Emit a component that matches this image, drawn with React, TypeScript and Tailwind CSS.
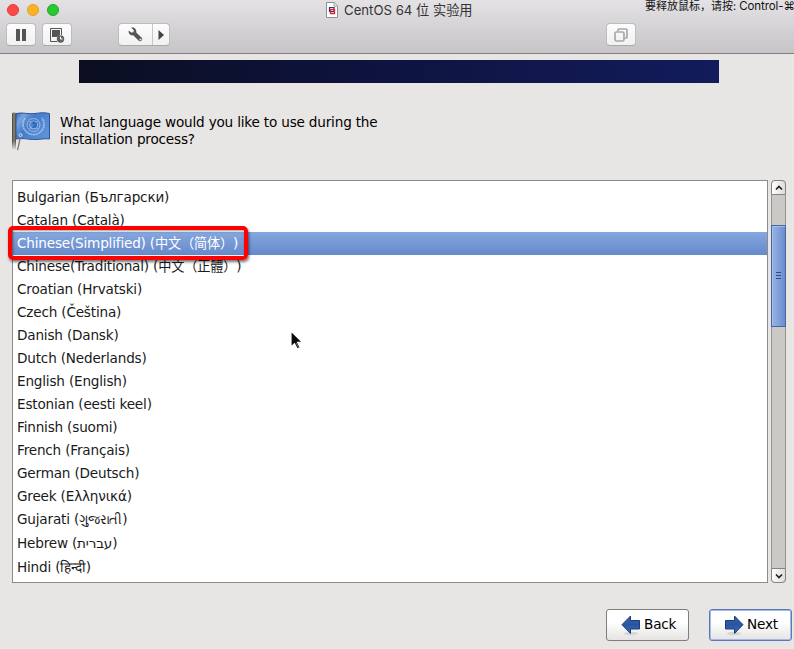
import type { ReactNode } from "react";

type Row = { name: string; native: string; kind?: "cjk" | "tall" | "gujarati"; selected?: boolean };

const languages: Row[] = [
  { name: "Bulgarian", native: "Български" },
  { name: "Catalan", native: "Català" },
  { name: "Chinese(Simplified)", native: "中文（简体）", kind: "cjk", selected: true },
  { name: "Chinese(Traditional)", native: "中文（正體）", kind: "cjk" },
  { name: "Croatian", native: "Hrvatski" },
  { name: "Czech", native: "Čeština" },
  { name: "Danish", native: "Dansk" },
  { name: "Dutch", native: "Nederlands" },
  { name: "English", native: "English" },
  { name: "Estonian", native: "eesti keel" },
  { name: "Finnish", native: "suomi" },
  { name: "French", native: "Français" },
  { name: "German", native: "Deutsch" },
  { name: "Greek", native: "Ελληνικά" },
  { name: "Gujarati", native: "ગુજરાતી", kind: "gujarati" },
  { name: "Hebrew", native: "עברית", kind: "tall" },
  { name: "Hindi", native: "हिन्दी", kind: "tall" },
];

function ToolButton({ className, children }: { className: string; children: ReactNode }) {
  return (
    <div className={`flex h-[23px] items-center justify-center rounded-[4px] border border-[#bdbcbe] border-b-[#a9a8aa] bg-linear-to-b from-[#fdfdfd] to-[#f1f1f1] ${className}`}>
      {children}
    </div>
  );
}

function TitleBar() {
  return (
    <header className="flex h-[54px] shrink-0 flex-col border-b border-[#80807f] bg-linear-to-b from-[#e4e2e4] to-[#c6c4c7]">
      <div className="relative flex h-[23px]">
        <div className="flex gap-2 pt-1 pl-[7px]">
          <span className="size-3 rounded-full border border-[#df3d3c] bg-[#fb4948]" />
          <span className="size-3 rounded-full border border-[#dfa023] bg-[#fdb225]" />
          <span className="size-3 rounded-full border border-[#25a32b] bg-[#2ac833]" />
        </div>
        <svg className="mt-[2px] ml-[267px] h-4 w-3 shrink-0" viewBox="0 0 12 16">
          <path d="M.5.5h7.7l3.3 3.3v11.7H.5z" fill="#fff" stroke="#8e8e90" />
          <path d="M8 .8v3.4h3.5" fill="#e4e4e4" stroke="#a4a4a6" />
          <path d="M3.500 5.500h4.500v4H3.500z" fill="none" stroke="#203a78" strokeWidth="1.200" />
          <path d="M4.500 7.500h4v4h-4z" fill="none" stroke="#e51f2b" strokeWidth="1.300" />
        </svg>
        <h1 className="ml-[6px] h-5 w-[140px] text-[13.2px] leading-5 whitespace-nowrap text-[#343335]">CentOS 64 位 实验用</h1>
        <p className="absolute top-[-3px] left-[645px] text-[11px] leading-[18px] whitespace-nowrap text-[#111]">要释放鼠标，请按: <span className="text-[11.500px] tracking-[-0.1px]">Control-⌘</span></p>
      </div>
      <div className="flex pl-[6px]">
        <ToolButton className="w-[30px]">
          <span className="flex gap-[2px]"><i className="h-3 w-1 bg-[#555]" /><i className="h-3 w-1 bg-[#555]" /></span>
        </ToolButton>
        <ToolButton className="ml-[6px] w-[30px]">
          <svg className="size-4" viewBox="0 0 16 16">
            <path d="M8 14.500H1.500v-13h11V8" fill="none" stroke="#555" />
            <path d="M3 3h8v5L8 10H3z" fill="#555" />
            <circle cx="11.500" cy="12" r="3.700" fill="#606060" />
            <path d="M11.500 9.700V12h2" fill="none" stroke="#fff" strokeWidth="1" />
          </svg>
        </ToolButton>
        <ToolButton className="ml-[46px] w-[52px]">
          <span className="flex h-full w-[34px] items-center justify-center border-r border-[#c6c5c7]">
            <svg className="size-[15px]" viewBox="0 0 15 15">
              <path d="M3.200.7 5.900 3.300 5.300 5.300 3.200 5.600.7 3.500C.3 6.500 2.200 8.900 5.200 8.300L11 14c2 1 4-1 3-3L8.300 5.500C8.600 2.200 6.300 0 3.200.7Z" fill="#555" />
              <circle cx="12.500" cy="12.500" r="1.100" fill="#ddd" />
            </svg>
          </span>
          <span className="flex w-[16px] justify-center"><svg className="h-[10px] w-[6px]" viewBox="0 0 6 10"><path d="M.5 0v10L6 5z" fill="#444" /></svg></span>
        </ToolButton>
        <ToolButton className="ml-[436px] w-[30px]">
          <svg className="size-[14px]" viewBox="0 0 14 14" fill="none" stroke="#a9a8aa" strokeWidth="1.700">
            <rect x="1" y="4" width="9" height="9" rx="1.500" />
            <path d="M4 3.500V2q0-1 1-1h7q1 0 1 1v7q0 1-1 1h-1.500" />
          </svg>
        </ToolButton>
      </div>
    </header>
  );
}

function FlagIcon() {
  return (
    <svg className="h-10 w-10 shrink-0" viewBox="0 1 40 40">
      <defs>
        <linearGradient id="pole" x1="0" x2="1"><stop stopColor="#3e403a" /><stop offset=".5" stopColor="#8a8c83" /><stop offset="1" stopColor="#44463f" /></linearGradient>
        <linearGradient id="cloth" x1="0" x2="1" y2=".6"><stop stopColor="#3465b0" /><stop offset=".2" stopColor="#79a5df" /><stop offset=".45" stopColor="#457bc8" /><stop offset="1" stopColor="#5c91d8" /></linearGradient>
        <linearGradient id="poleFade" x1="0" x2="0" y1="0" y2="1"><stop offset=".75" stopColor="#e8e6e4" stopOpacity="0" /><stop offset="1" stopColor="#e8e6e4" /></linearGradient>
      </defs>
      <path d="M4 3.500C11 2 16 4.500 23 3.500S32 2.500 37.500 3.500v25.500c-6-1-11 1-17 .5S10 28 4 29Z" fill="url(#cloth)" stroke="#2c559e" />
      <g fill="none" stroke="#b4d0f1" opacity=".75">
        <circle cx="21.500" cy="15" r="6.500" />
        <circle cx="21.500" cy="15" r="4" />
        <path d="M13 8c-4 6-2 13 5 16 2 .8 5 .8 7 0 7-3 9-10 5-16" strokeWidth="1.800" strokeDasharray="2 .5" />
        <path d="M17.500 11l8 8m0-8-8 8" strokeWidth=".8" />
      </g>
      <path d="m19 13 3-2 3 2v4l-2 1h-3l1-3z" fill="#2c64ba" opacity=".8" />
      <rect x="0" y="2.500" width="4" height="37" rx="1.500" fill="url(#pole)" />
      <rect x="0" y="2.500" width="4" height="38" fill="url(#poleFade)" />
      <path d="M8.500 26C7.500 31 7 35 5.500 40" fill="none" stroke="#777" strokeWidth="1.300" />
      <circle cx="8.500" cy="25" r="1.500" fill="none" stroke="#d4dfec" />
    </svg>
  );
}

function LanguageRow({ row }: { row: Row }) {
  const height = row.kind === "tall" ? "h-6" : row.kind ? "h-[23px]" : "h-[23px] pb-[2px]";
  const color = row.selected ? "bg-linear-to-b from-[#86a7de] to-[#6689cb] text-white" : "text-[#1a1a1a]";
  const native = row.kind === "cjk" ? "text-[13.200px] [text-spacing-trim:space-all]" : row.kind === "gujarati" ? "text-[13px]" : "";
  return (
    <li className={`relative flex items-center pl-1 whitespace-nowrap ${height} ${color}`}>
      <span className="leading-[22px]">{row.name} (<span className={native}>{row.native}</span>)</span>
      {row.selected && (
        <span className="absolute top-[-6px] left-[-5px] z-10 h-[34px] w-[240px] rounded-[5px] border-4 border-[#fe0000] shadow-[1px_2px_3px_rgba(0,0,0,0.55),inset_1px_1px_3px_rgba(0,0,0,0.4)]" />
      )}
    </li>
  );
}

function ScrollArrow({ down }: { down?: boolean }) {
  return (
    <div className={`flex h-[15px] items-center justify-center border border-[#85837e] bg-linear-to-r from-white to-[#dedddb] ${down ? "rounded-b-[4px]" : "rounded-t-[4px]"}`}>
      <svg className="h-[6px] w-2" viewBox="0 0 8 6"><path d={down ? "M1 1.500 4 4.500l3-3" : "M1 4.500l3-3 3 3"} fill="none" stroke="#222" strokeWidth="1.700" /></svg>
    </div>
  );
}

function ScrollBar() {
  return (
    <div className="ml-[3px] flex h-[403px] w-[15px] flex-col rounded-[4px] bg-[#cbc9c5]">
      <ScrollArrow />
      <div className="h-[30px] border-x border-[#96948f]" />
      <div className="flex h-[102px] flex-col items-center justify-center gap-[2px] border border-[#47669f] bg-linear-to-r from-[#97b5e8] to-[#6b8dce] pb-[2px] shadow-[inset_1px_1px_0_#a5bee9]">
        <i className="h-px w-[5px] bg-[#304d80]" /><i className="h-px w-[5px] bg-[#304d80]" /><i className="h-px w-[5px] bg-[#304d80]" />
      </div>
      <div className="flex-1 border-x border-[#96948f]" />
      <ScrollArrow down />
    </div>
  );
}

function NavButton({ next }: { next?: boolean }) {
  return (
    <button className={`flex h-8 w-[83px] items-center rounded-[3px] border bg-linear-to-b from-white from-40% to-[#e5e4e2] pl-[14px] text-black ${next ? "border-[#5b7ab5] shadow-[inset_0_0_0_1px_#a5bbe2]" : "border-[#807e79]"}`}>
      <svg className="h-[22px] w-5 shrink-0" viewBox="0 0 20 22">
        <defs><linearGradient id={next ? "arrowNext" : "arrowBack"} x1="0" x2="0" y1="0" y2="1"><stop stopColor="#3465a4" /><stop offset=".5" stopColor="#2b54a0" /><stop offset="1" stopColor="#3e72bb" /></linearGradient></defs>
        <ellipse cx="10" cy="19.500" rx="7" ry="1.800" fill="#ccc" opacity=".7" />
        <path d={next ? "M1.500 6.500h9V2l8.500 8.700-8.500 8.800V15h-9z" : "M18.500 6.500h-9V2L1 10.700l8.500 8.800V15h9z"} fill={next ? "url(#arrowNext)" : "url(#arrowBack)"} stroke="#1c3c7b" />
      </svg>
      <span className="ml-[3px] pb-[2px] leading-5">{next ? "Next" : "Back"}</span>
    </button>
  );
}

export default function App() {
  return (
    <div className="flex h-[649px] w-[794px] flex-col overflow-hidden bg-[#e8e6e4] font-['Inter','Noto_Sans_CJK_SC',sans-serif]">
      <TitleBar />
      <main className="relative flex flex-1 flex-col font-['DejaVu_Sans','Noto_Sans_CJK_SC',sans-serif] text-[13.600px] tracking-[-0.190px]">
        <div className="mt-[6px] ml-[79px] h-[23px] w-[640px] bg-linear-to-r from-[#0b0e20] via-[#0d1238] via-35% to-[#121c5c]" />
        <div className="mt-[28px] ml-3 flex h-10">
          <FlagIcon />
          <p className="ml-2 pt-[3px] leading-[17px] text-black">What language would you like to use during the<br />installation process?</p>
        </div>
        <div className="mt-[29px] ml-3 flex">
          <ul className="h-[403px] w-[756px] border border-[#8d8b86] bg-white pt-[5px]">
            {languages.map((row) => <LanguageRow key={row.name} row={row} />)}
          </ul>
          <ScrollBar />
        </div>
        <div className="mt-[26px] ml-[606px] flex gap-5"><NavButton /><NavButton next /></div>
        <svg className="absolute top-[275px] left-[288px] h-[24px] w-[17px]" viewBox="0 0 17 24">
          <path d="M3 2v16l3.500-3.300L9.300 20l3-1.400-2.700-5.200h4.800z" fill="#090909" stroke="#fff" strokeWidth="1.200" />
          <path d="m8 14 3 5" stroke="#777" />
        </svg>
      </main>
    </div>
  );
}
